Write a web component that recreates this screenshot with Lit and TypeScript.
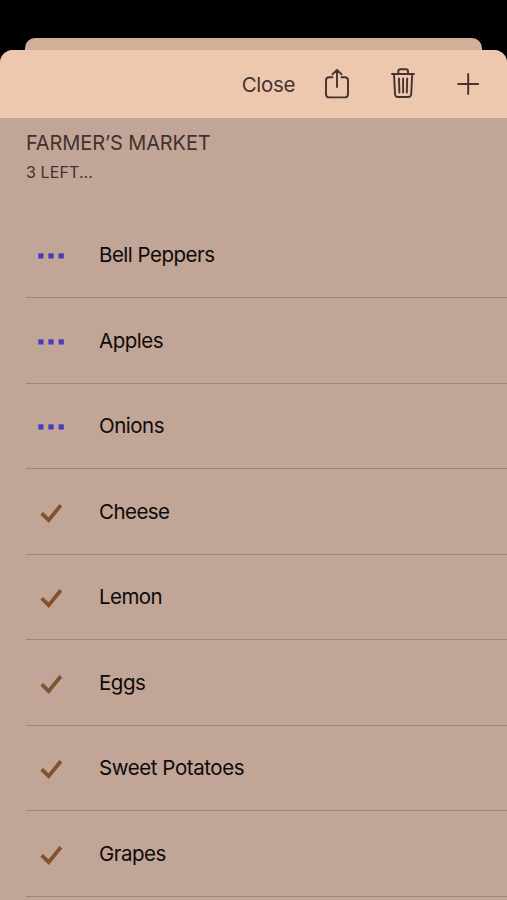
import { LitElement, html, css } from "lit";
import { customElement, state } from "lit/decorators.js";

interface Item { name: string; done: boolean; spacing: number; }

@customElement("app-root")
export class AppRoot extends LitElement {
  static styles = css`
    :host { display: flex; flex-direction: column; box-sizing: border-box; height: 900px; width: 100%; overflow: hidden; padding-top: 38px; background: #000; font-family: Inter, "Liberation Sans", sans-serif; color: #0f0908; }
    .behind { flex: none; height: 25px; margin: 0 25px; border-radius: 10px 10px 0 0; background: #d2b198; }
    .sheet { flex: 1; min-height: 0; margin-top: -13px; border-radius: 13px 13px 0 0; background: #c1a597; overflow: hidden; display: flex; flex-direction: column; z-index: 1; }
    .bar { flex: none; height: 68px; box-sizing: border-box; background: #edc8ae; color: #45322f; display: flex; align-items: center; justify-content: flex-end; padding-right: 27px; }
    .close { font-size: 20.5px; line-height: 26px; letter-spacing: -0.35px; margin-right: 28px; padding-top: 1px; }
    .bar svg { display: block; flex: none; fill: none; stroke: currentColor; stroke-width: 1.9; stroke-linecap: round; stroke-linejoin: round; }
    .trash { margin: 0 41px 0 40px; }
    .head { flex: none; box-sizing: border-box; height: 94.8px; padding: 12px 0 0 26px; color: #43312f; }
    .title { font-size: 20px; line-height: 26px; letter-spacing: -0.12px; }
    .left { font-size: 16px; line-height: 20px; margin-top: 6px; letter-spacing: 0.1px; }
    .row { flex: none; box-sizing: border-box; height: 85.5px; margin-left: 26px; border-bottom: 1px solid #a1857a; display: flex; align-items: center; }
    .mark { width: 73px; height: 28px; flex: none; }
    .name { font-size: 20.5px; line-height: 28px; white-space: nowrap; }
    .dots { fill: #493bbd; }
    .check { fill: none; stroke: #815331; stroke-width: 3.8; }
  `;

  @state() items: Item[] = [
    { name: "Bell Peppers", done: false, spacing: -0.5 },
    { name: "Apples", done: false, spacing: -0.5 },
    { name: "Onions", done: false, spacing: -0.5 },
    { name: "Cheese", done: true, spacing: -0.55 },
    { name: "Lemon", done: true, spacing: -0.55 },
    { name: "Eggs", done: true, spacing: -0.5 },
    { name: "Sweet Potatoes", done: true, spacing: -0.43 },
    { name: "Grapes", done: true, spacing: -0.5 },
    { name: "", done: true, spacing: 0 },
  ];

  private mark(done: boolean) {
    return done
      ? html`<svg class="mark" viewBox="0 0 73 28"><path class="check" d="M15.7 15.4L22.7 22.2L34.8 7.2"/></svg>`
      : html`<svg class="mark dots" viewBox="0 0 73 28"><rect x="12.3" y="12.3" width="5.2" height="5.2"/><rect x="22.4" y="12.3" width="5.2" height="5.2"/><rect x="32.6" y="12.3" width="5.2" height="5.2"/></svg>`;
  }

  render() {
    return html`
      <div class="behind"></div>
      <div class="sheet">
        <div class="bar">
          <span class="close">Close</span>
          <svg width="28" height="34" viewBox="0 0 28 34"><path d="M9.5 10.3H6.2Q3 10.3 3 13.5V27.2Q3 30.4 6.2 30.4H21.8Q25 30.4 25 27.2V13.5Q25 10.3 21.8 10.3H18.5M14 20V3M9.4 7.4L14 2.8L18.6 7.4"/></svg>
          <svg class="trash" width="24" height="34" viewBox="0 0 24 34"><path d="M1 7H23M7.3 7V4.5Q7.3 2.3 9.4 2.3H14.9Q17 2.3 17 4.5V7M3 7L4 27.2Q4.2 30 7 30H17.2Q20 30 20.2 27.2L21.2 7M8 11.5L8.4 25.5M12.1 11.5V25.5M16.2 11.5L15.8 25.5"/></svg>
          <svg width="24" height="34" viewBox="0 0 24 34"><path d="M2.2 17H22.2M12.2 7V27"/></svg>
        </div>
        <div class="head">
          <div class="title">FARMER’S MARKET</div>
          <div class="left">3 LEFT...</div>
        </div>
        ${this.items.map((i) => html`<div class="row">${i.name ? this.mark(i.done) : ""}<span class="name" style="letter-spacing:${i.spacing}px">${i.name}</span></div>`)}
      </div>`;
  }
}
